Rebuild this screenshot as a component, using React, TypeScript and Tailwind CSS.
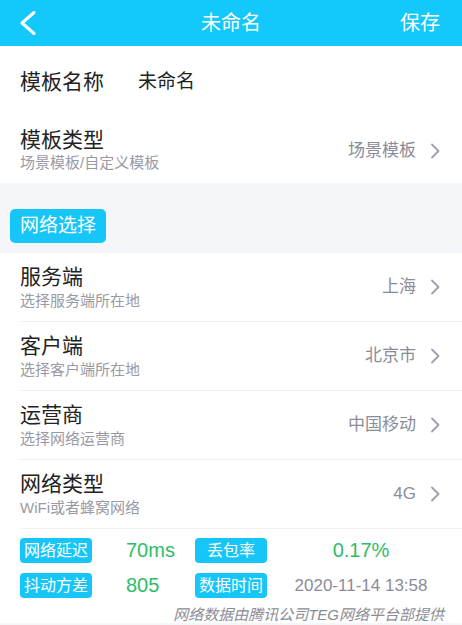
import React from 'react';

const Chevron: React.FC = () => (
  <svg width="10" height="16" viewBox="0 0 10 16" className="ml-[14px] shrink-0">
    <polyline points="2,1.5 8.5,8 2,14.5" fill="none" stroke="#9a9fb0" strokeWidth="1.8" strokeLinecap="round" strokeLinejoin="round" />
  </svg>
);

type RowProps = { title: string; sub: string; value: string };

const NetRow: React.FC<RowProps> = ({ title, sub, value }) => (
  <div className="ml-5 h-[69px] border-b border-[#eef0f5] flex items-center justify-between pr-[22px]">
    <div className="flex flex-col mt-[4px]">
      <span className="text-[21px] leading-[24px] text-[#222]">{title}</span>
      <span className="text-[15px] leading-[24px] text-[#9a9aa4]">{sub}</span>
    </div>
    <div className="flex items-center">
      <span className="text-[17px] text-[#8b8c99]">{value}</span>
      <Chevron />
    </div>
  </div>
);

const Badge: React.FC<{ text: string }> = ({ text }) => (
  <div className="w-[72px] h-[25px] shrink-0 rounded-[4px] bg-[#16c6f8] text-white text-[16px] leading-[25px] text-center">
    {text}
  </div>
);

const App: React.FC = () => {
  return (
    <div className="w-[462px] h-[625px] bg-[#f5f6fa] overflow-hidden font-['Liberation_Sans','Noto_Sans_CJK_SC',sans-serif]">
      <div className="h-[46px] bg-[#13c8fb] grid grid-cols-[1fr_auto_1fr] items-center text-white">
        <div className="pl-[19px] flex items-center">
          <svg width="18" height="26" viewBox="0 0 18 26">
            <polyline points="15,2.5 3,13 15,23.5" fill="none" stroke="#fff" strokeWidth="3" strokeLinecap="round" strokeLinejoin="round" />
          </svg>
        </div>
        <div className="text-[20px]">未命名</div>
        <div className="text-right pr-[22px] text-[20px]">保存</div>
      </div>

      <div className="bg-white">
        <div className="h-[72px] flex items-center px-5">
          <span className="w-[118px] text-[21px] text-[#222]">模板名称</span>
          <span className="text-[19px] text-[#222]">未命名</span>
        </div>
        <div className="h-[65px] flex items-center justify-between pl-5 pr-[22px]">
          <div className="flex flex-col">
            <span className="text-[21px] leading-[24px] text-[#222]">模板类型</span>
            <span className="text-[15px] leading-[22px] text-[#9a9aa4]">场景模板/自定义模板</span>
          </div>
          <div className="flex items-center">
            <span className="text-[17px] text-[#8b8c99]">场景模板</span>
            <Chevron />
          </div>
        </div>
      </div>

      <div className="h-[70px] flex items-end pl-[10px] pb-[10px]">
        <div className="h-[34px] px-[10px] rounded-[5px] bg-[#16c6f8] text-white text-[19px] leading-[34px]">网络选择</div>
      </div>

      <div className="bg-white h-[370px]">
        <NetRow title="服务端" sub="选择服务端所在地" value="上海" />
        <NetRow title="客户端" sub="选择客户端所在地" value="北京市" />
        <NetRow title="运营商" sub="选择网络运营商" value="中国移动" />
        <NetRow title="网络类型" sub="WiFi或者蜂窝网络" value="4G" />

        <div className="pt-[9px] pl-5 flex flex-col gap-[10px]">
          <div className="flex items-center h-[25px]">
            <Badge text="网络延迟" />
            <span className="w-[103px] pl-[34px] text-[20px] leading-[25px] text-[#2dbd68]">70ms</span>
            <Badge text="丢包率" />
            <span className="w-[188px] text-center text-[20px] leading-[25px] text-[#2dbd68]">0.17%</span>
          </div>
          <div className="flex items-center h-[25px]">
            <Badge text="抖动方差" />
            <span className="w-[103px] pl-[34px] text-[20px] leading-[25px] text-[#2dbd68]">805</span>
            <Badge text="数据时间" />
            <span className="w-[188px] text-center text-[17px] leading-[25px] text-[#8b8c99]">2020-11-14 13:58</span>
          </div>
        </div>
        <div className="mt-[8px] pr-[18px] text-right italic text-[15px] leading-[18px] text-[#8c8c96]">
          网络数据由腾讯公司TEG网络平台部提供
        </div>
      </div>
    </div>
  );
};

export default App;
